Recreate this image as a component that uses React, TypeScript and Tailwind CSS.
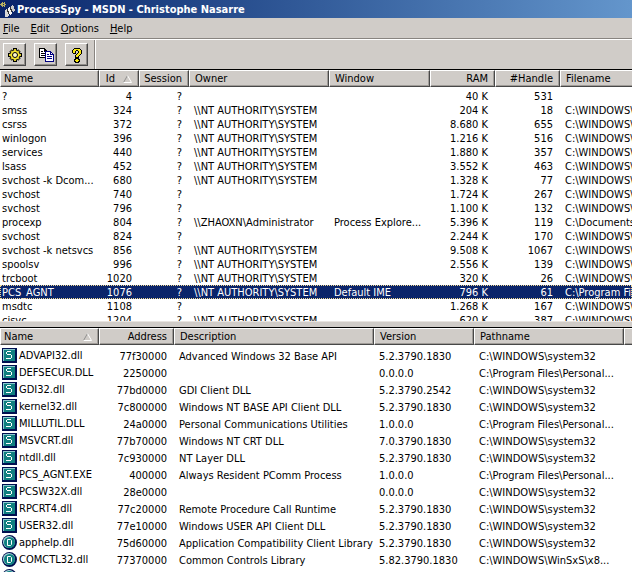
import React, { useState } from 'react';

interface Column {
  label: string;
  width: string;
  right?: boolean;
  sorted?: boolean;
}

const processColumns: Column[] = [
  { label: 'Name', width: 'w-[99px]' },
  { label: 'Id', width: 'w-[40px]', right: true, sorted: true },
  { label: 'Session', width: 'w-[50px]', right: true },
  { label: 'Owner', width: 'w-[140px]' },
  { label: 'Window', width: 'w-[101px]' },
  { label: 'RAM', width: 'w-[65px]', right: true },
  { label: '#Handle', width: 'w-[65px]', right: true },
  { label: 'Filename', width: 'w-auto' },
];

const moduleColumns: Column[] = [
  { label: 'Name', width: 'w-[99px]', sorted: true },
  { label: 'Address', width: 'w-[75px]', right: true },
  { label: 'Description', width: 'w-[200px]' },
  { label: 'Version', width: 'w-[100px]' },
  { label: 'Pathname', width: 'w-[150px]' },
  { label: '', width: 'w-auto' },
];

const SYSTEM = '\\\\NT AUTHORITY\\SYSTEM';
const WIN = 'C:\\WINDOWS\\system32';

// name, id, session, owner, window, ram, handles, filename
const processes: string[][] = [
  ['?', '4', '?', '', '', '40 K', '531', ''],
  ['smss', '324', '?', SYSTEM, '', '204 K', '18', WIN],
  ['csrss', '372', '?', SYSTEM, '', '8.680 K', '655', WIN],
  ['winlogon', '396', '?', SYSTEM, '', '1.216 K', '516', WIN],
  ['services', '440', '?', SYSTEM, '', '1.880 K', '357', WIN],
  ['lsass', '452', '?', SYSTEM, '', '3.552 K', '463', WIN],
  ['svchost -k Dcom...', '680', '?', SYSTEM, '', '1.328 K', '77', WIN],
  ['svchost', '740', '?', '', '', '1.724 K', '267', WIN],
  ['svchost', '796', '?', '', '', '1.100 K', '132', WIN],
  ['procexp', '804', '?', '\\\\ZHAOXN\\Administrator', 'Process Explore...', '5.396 K', '119', 'C:\\Documents'],
  ['svchost', '824', '?', '', '', '2.244 K', '170', WIN],
  ['svchost -k netsvcs', '856', '?', SYSTEM, '', '9.508 K', '1067', WIN],
  ['spoolsv', '996', '?', SYSTEM, '', '2.556 K', '139', WIN],
  ['trcboot', '1020', '?', SYSTEM, '', '320 K', '26', WIN],
  ['PCS_AGNT', '1076', '?', SYSTEM, 'Default IME', '796 K', '61', 'C:\\Program Files'],
  ['msdtc', '1108', '?', '', '', '1.268 K', '167', WIN],
  ['cisvc', '1204', '?', SYSTEM, '', '620 K', '387', WIN],
];

type ModuleKind = 'static' | 'dynamic';

interface ModuleRow {
  kind: ModuleKind;
  cells: string[];
}

const modules: ModuleRow[] = [
  { kind: 'static', cells: ['ADVAPI32.dll', '77f30000', 'Advanced Windows 32 Base API', '5.2.3790.1830', WIN] },
  { kind: 'static', cells: ['DEFSECUR.DLL', '2250000', '', '0.0.0.0', 'C:\\Program Files\\Personal...'] },
  { kind: 'static', cells: ['GDI32.dll', '77bd0000', 'GDI Client DLL', '5.2.3790.2542', WIN] },
  { kind: 'static', cells: ['kernel32.dll', '7c800000', 'Windows NT BASE API Client DLL', '5.2.3790.1830', WIN] },
  { kind: 'static', cells: ['MILLUTIL.DLL', '24a0000', 'Personal Communications Utilities', '1.0.0.0', 'C:\\Program Files\\Personal...'] },
  { kind: 'static', cells: ['MSVCRT.dll', '77b70000', 'Windows NT CRT DLL', '7.0.3790.1830', WIN] },
  { kind: 'static', cells: ['ntdll.dll', '7c930000', 'NT Layer DLL', '5.2.3790.1830', WIN] },
  { kind: 'static', cells: ['PCS_AGNT.EXE', '400000', 'Always Resident PComm Process', '1.0.0.0', 'C:\\Program Files\\Personal...'] },
  { kind: 'static', cells: ['PCSW32X.dll', '28e0000', '', '0.0.0.0', WIN] },
  { kind: 'static', cells: ['RPCRT4.dll', '77c20000', 'Remote Procedure Call Runtime', '5.2.3790.1830', WIN] },
  { kind: 'static', cells: ['USER32.dll', '77e10000', 'Windows USER API Client DLL', '5.2.3790.1830', WIN] },
  { kind: 'dynamic', cells: ['apphelp.dll', '75d60000', 'Application Compatibility Client Library', '5.2.3790.1830', WIN] },
  { kind: 'dynamic', cells: ['COMCTL32.dll', '77370000', 'Common Controls Library', '5.82.3790.1830', 'C:\\WINDOWS\\WinSxS\\x8...'] },
  { kind: 'dynamic', cells: ['', '', '', '', ''] },
];

function AppIcon() {
  return (
    <svg width="16" height="16" viewBox="0 0 16 16" shapeRendering="crispEdges" aria-hidden="true">
      <path d="M2 1h1v1h1V1h1v2h1v1H5v2H4V5H3v1H2V5H1V4H0V3h1V2h1z" fill="#b8b060" />
      <path d="M3 3h1v1H3z" fill="#0a246a" />
      <path d="M5 9l2-1 2 6-2 2H5V9z" fill="#d8d8d8" />
      <path d="M8 7l2-1 2 6-2 2-2-5z" fill="#f4f4f4" />
      <path d="M11 5l2-1 2 5-1 3-2-2z" fill="#c8c8c8" />
      <path d="M7 8h1v2h1v3H8v-2H7zM10 6h1v2h1v3h-1V9h-1z" fill="#303030" />
    </svg>
  );
}

function GearIcon() {
  return (
    <svg width="16" height="16" viewBox="0 0 16 16" aria-hidden="true">
      <path d="M8 1v14M1 8h14" stroke="#000" strokeWidth="4" />
      <path d="M3.500 3.500l9 9M12.500 3.500l-9 9" stroke="#202018" strokeWidth="3.500" />
      <circle cx="8" cy="8" r="5.500" fill="#202018" />
      <path d="M8 2v12M2 8h12" stroke="#d8c828" strokeWidth="2" />
      <path d="M4 4l8 8M12 4l-8 8" stroke="#b8a820" strokeWidth="1.500" />
      <circle cx="8" cy="8" r="4.500" fill="#f4e430" />
      <circle cx="8" cy="8" r="2.500" fill="#fffbd0" stroke="#000" />
    </svg>
  );
}

function CopyIcon() {
  return (
    <svg width="16" height="16" viewBox="0 0 16 16" shapeRendering="crispEdges" aria-hidden="true">
      <path d="M1 1h6v1h1v1h1v8H1z" fill="#000" />
      <path d="M2 2h4v3h2v5H2z" fill="#fff" />
      <path d="M3 4h2v1H3zM3 6h4v1H3zM3 8h4v1H3z" fill="#000" />
      <path d="M7 4h6v1h1v1h1v1h1v8H7z" fill="#000080" />
      <path d="M8 5h4v3h3v6H8z" fill="#fff" />
      <path d="M13 6h1v1h-1z" fill="#fff" />
      <path d="M9 7h2v1H9zM9 9h5v1H9zM9 11h5v1H9z" fill="#000080" />
    </svg>
  );
}

function HelpIcon() {
  return (
    <svg width="16" height="16" viewBox="0 0 16 16" shapeRendering="crispEdges" aria-hidden="true">
      <path d="M5 1h6v1h1v1h1v4h-1v1h-1v1h-1v2H6V8h1V7h1V6h1V4H7v3H4V6H3V3h1V2h1zM6 11h4v1h1v3h-1v1H6v-1H5v-3h1z" fill="#000" />
      <path d="M5 2h6v1h1v4h-1v1h-1v1H9v1H7V8h1V7h1V6h1V4H9V3H7v1H6v2H4V3h1zM7 12h2v1h1v1H9v1H7v-1H6v-1h1z" fill="#f8e810" />
    </svg>
  );
}

function ModuleIcon({ kind }: { kind: ModuleKind }) {
  if (kind === 'static') {
    return (
      <span className="flex size-[15px] shrink-0 items-center justify-center border border-r-2 border-b-2 border-[#001050] bg-[#108080] shadow-[inset_1px_1px_0_#8cc8d0]">
        <svg width="6" height="8" viewBox="0 0 6 8" shapeRendering="crispEdges" aria-hidden="true">
          <path d="M1 0h4v1H1v2h4v1h1v3H5v1H0V7h5V4H1V3H0V1h1z" fill="#fff" />
        </svg>
      </span>
    );
  }
  return (
    <svg width="15" height="15" viewBox="0 0 15 15" className="shrink-0" aria-hidden="true">
      <circle cx="7.5" cy="7.5" r="7.5" fill="#001050" />
      <circle cx="7" cy="7" r="6" fill="#b0dce0" />
      <circle cx="7.5" cy="7.5" r="5.5" fill="#108080" />
      <path d="M5.500 4.500h3l1 1v4l-1 1h-3z" fill="none" stroke="#fff" />
    </svg>
  );
}

function SortArrow() {
  return (
    <svg width="9" height="8" viewBox="0 0 9 8" className="shrink-0" aria-hidden="true">
      <path d="M4.500 0.500L0.500 7.500" stroke="#909090" fill="none" />
      <path d="M4.500 0.500L8.500 7.500H0.500" stroke="#fff" fill="none" />
    </svg>
  );
}

function HeaderRow({ columns }: { columns: Column[] }) {
  return (
    <thead>
      <tr>
        {columns.map((col, i) => (
          <th key={i} scope="col" className={`group h-[17px] p-0 font-normal ${col.width}`}>
            <button
              type="button"
              className={`flex h-[17px] w-full items-center border border-t-white border-r-[#484848] border-b-[#484848] border-l-white bg-[#d0ccc8] pt-px pr-[6px] leading-[14px] shadow-[inset_-1px_-1px_0_#a09c98] group-last:border-r-0 group-last:shadow-[inset_0_-1px_0_#a09c98] ${
                i === 0 ? 'pl-[3px]' : 'pl-[5px]'
              } ${col.right ? 'justify-end' : 'justify-between'} ${col.right && col.sorted ? 'gap-2' : ''}`}
            >
              {col.label}
              {col.sorted && <SortArrow />}
            </button>
          </th>
        ))}
      </tr>
    </thead>
  );
}

function ToolButton({ label, children }: { label: string; children: React.ReactNode }) {
  return (
    <button
      type="button"
      aria-label={label}
      className="flex h-[23px] w-[23px] items-center justify-center border border-t-white border-r-[#484848] border-b-[#484848] border-l-white shadow-[inset_-1px_-1px_0_#908c88]"
    >
      {children}
    </button>
  );
}

export default function App() {
  const [selected, setSelected] = useState('1076');

  return (
    <div className="flex h-screen flex-col overflow-hidden bg-[#d0ccc8] font-['DejaVu_Sans_Condensed','DejaVu_Sans',sans-serif] text-[11px] leading-[14px] text-black">
      <header className="flex h-[18px] shrink-0 items-center bg-linear-to-r from-[#0a246a] to-[#6496cc] text-white">
        <AppIcon />
        <h1 className="pt-[2px] pl-px font-bold whitespace-nowrap">ProcessSpy - MSDN - Christophe Nasarre</h1>
      </header>

      <nav className="flex h-[21px] shrink-0 items-center gap-[11px] border-b border-[#888480] pt-[2px] pl-[3px]">
        {['File', 'Edit', 'Options', 'Help'].map((item) => (
          <button key={item} type="button">
            <span className="underline">{item[0]}</span>
            {item.slice(1)}
          </button>
        ))}
      </nav>

      <div className="flex h-[31px] shrink-0 items-center gap-2 border-t border-b border-t-white border-b-black pl-[3px]">
        <ToolButton label="Refresh">
          <GearIcon />
        </ToolButton>
        <ToolButton label="Copy">
          <CopyIcon />
        </ToolButton>
        <ToolButton label="Help">
          <HelpIcon />
        </ToolButton>
        <div className="-ml-[2px] h-full w-[2px] border-l border-[#888480] bg-white" />
      </div>

      <section className="min-h-0 flex-[251] overflow-hidden bg-white">
        <table className="w-full table-fixed border-separate border-spacing-0">
          <HeaderRow columns={processColumns} />
          <tbody className="before:block before:h-[2px]">
            {processes.map((row) => (
              <tr
                key={row[1]}
                onClick={() => setSelected(row[1])}
                className={row[1] === selected ? 'bg-[#0a246a] text-white outline outline-dotted -outline-offset-1 outline-[#f0d890]' : ''}
              >
                {row.map((cell, i) => (
                  <td
                    key={i}
                    className={`h-[14px] overflow-hidden p-0 pt-px leading-[13px] whitespace-nowrap ${
                      processColumns[i].right ? 'pr-[7px] text-right' : i === 0 ? 'pl-[2px]' : 'pl-[5px]'
                    }`}
                  >
                    {cell}
                  </td>
                ))}
              </tr>
            ))}
          </tbody>
        </table>
      </section>

      <div className="h-[7px] shrink-0 cursor-row-resize border-t border-b border-t-[#e8e4e0] border-b-black" />

      <section className="min-h-0 flex-[244] overflow-hidden bg-white">
        <table className="w-full table-fixed border-separate border-spacing-0">
          <HeaderRow columns={moduleColumns} />
          <tbody className="before:block before:h-[2px]">
            {modules.map((mod, r) => (
              <tr key={r}>
                {mod.cells.map((cell, i) =>
                  i === 0 ? (
                    <td key={i} className="h-[17px] p-0 pl-[2px] whitespace-nowrap">
                      <span className="flex items-center gap-[2px]">
                        <ModuleIcon kind={mod.kind} />
                        <span className="pt-px">{cell}</span>
                      </span>
                    </td>
                  ) : (
                    <td
                      key={i}
                      className={`h-[17px] p-0 pt-[2px] whitespace-nowrap ${
                        moduleColumns[i].right ? 'pr-[7px] text-right' : 'pl-[5px]'
                      }`}
                    >
                      {cell}
                    </td>
                  )
                )}
              </tr>
            ))}
          </tbody>
        </table>
      </section>
    </div>
  );
}
